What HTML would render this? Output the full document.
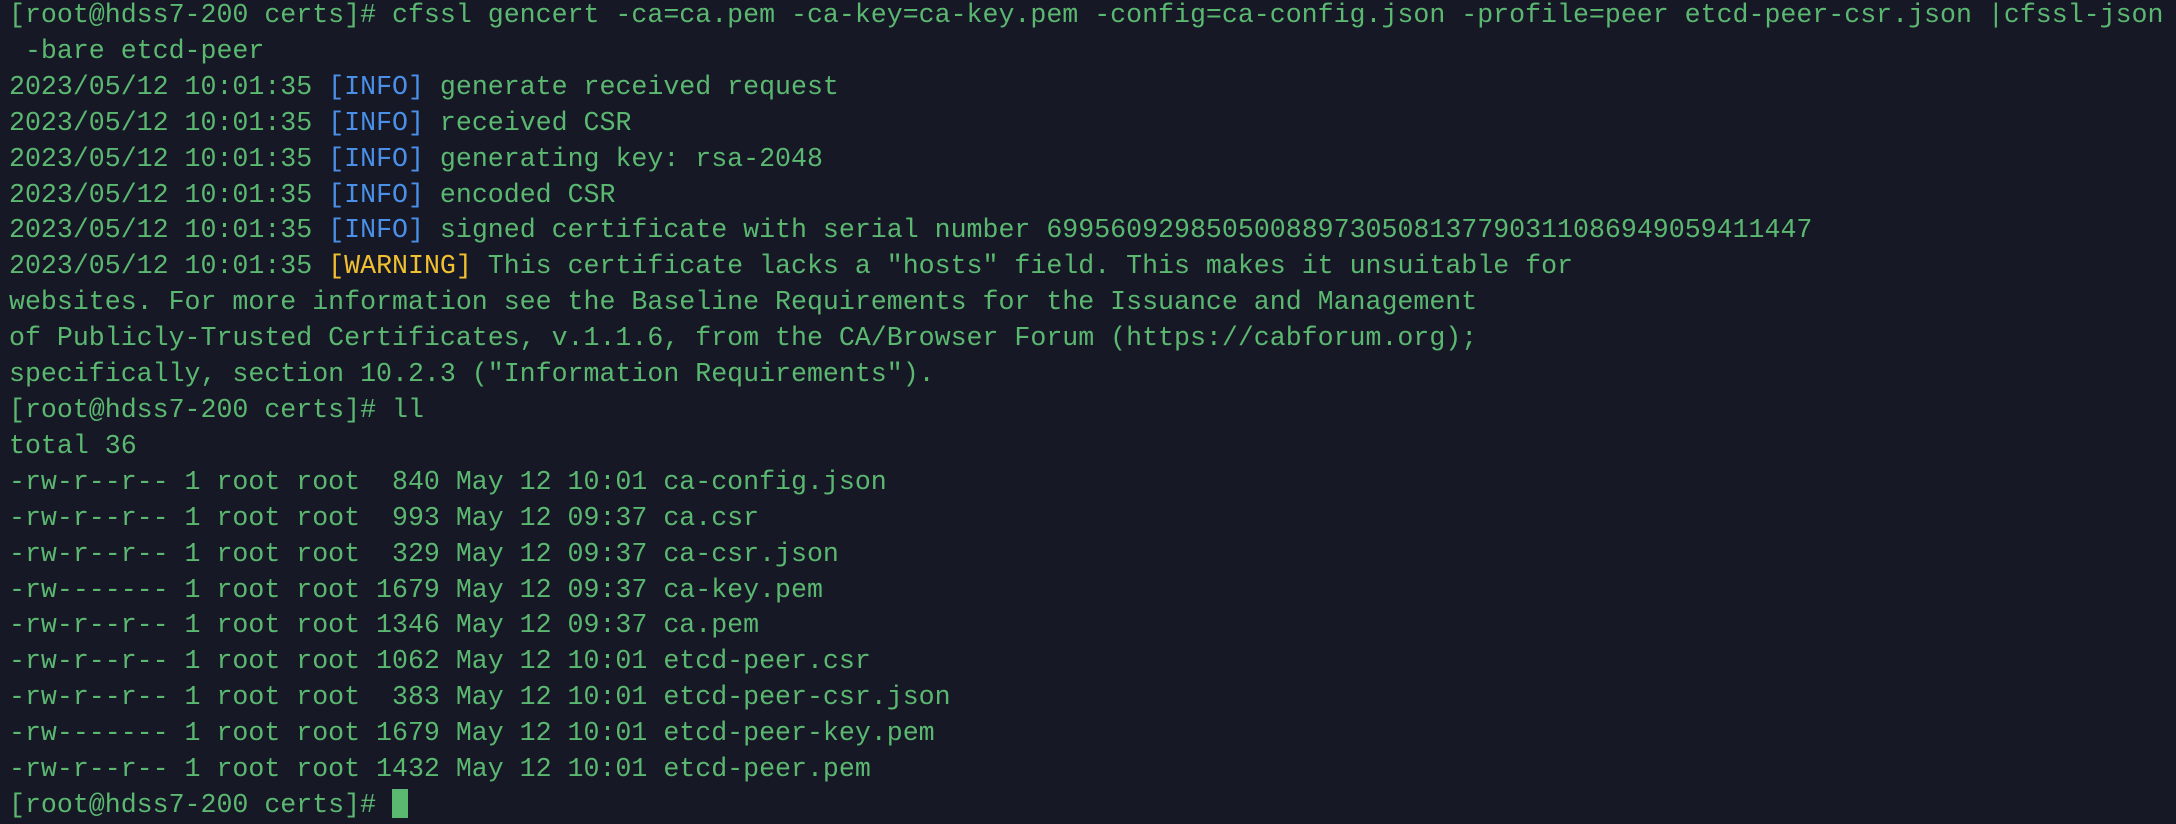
<!DOCTYPE html>
<html><head><meta charset="utf-8"><style>
html,body{margin:0;padding:0;background:#161826;width:2176px;height:818px;overflow:hidden}
pre{margin:0;position:absolute;left:9px;top:-2px;font-family:"Liberation Mono",monospace;font-size:26.6px;line-height:35.9px;color:#5bb870;white-space:pre}
.b{color:#4a8fe8}.y{color:#f0c030}
.c{display:inline-block;width:16px;height:29px;background:#5bb870;vertical-align:-6px}
</style></head><body><pre>[root@hdss7-200 certs]# cfssl gencert -ca=ca.pem -ca-key=ca-key.pem -config=ca-config.json -profile=peer etcd-peer-csr.json |cfssl-json
 -bare etcd-peer
2023/05/12 10:01:35 <span class="b">[INFO]</span> generate received request
2023/05/12 10:01:35 <span class="b">[INFO]</span> received CSR
2023/05/12 10:01:35 <span class="b">[INFO]</span> generating key: rsa-2048
2023/05/12 10:01:35 <span class="b">[INFO]</span> encoded CSR
2023/05/12 10:01:35 <span class="b">[INFO]</span> signed certificate with serial number 699560929850500889730508137790311086949059411447
2023/05/12 10:01:35 <span class="y">[WARNING]</span> This certificate lacks a "hosts" field. This makes it unsuitable for
websites. For more information see the Baseline Requirements for the Issuance and Management
of Publicly-Trusted Certificates, v.1.1.6, from the CA/Browser Forum (https://cabforum.org);
specifically, section 10.2.3 ("Information Requirements").
[root@hdss7-200 certs]# ll
total 36
-rw-r--r-- 1 root root  840 May 12 10:01 ca-config.json
-rw-r--r-- 1 root root  993 May 12 09:37 ca.csr
-rw-r--r-- 1 root root  329 May 12 09:37 ca-csr.json
-rw------- 1 root root 1679 May 12 09:37 ca-key.pem
-rw-r--r-- 1 root root 1346 May 12 09:37 ca.pem
-rw-r--r-- 1 root root 1062 May 12 10:01 etcd-peer.csr
-rw-r--r-- 1 root root  383 May 12 10:01 etcd-peer-csr.json
-rw------- 1 root root 1679 May 12 10:01 etcd-peer-key.pem
-rw-r--r-- 1 root root 1432 May 12 10:01 etcd-peer.pem
[root@hdss7-200 certs]# <span class="c"></span></pre></body></html>
